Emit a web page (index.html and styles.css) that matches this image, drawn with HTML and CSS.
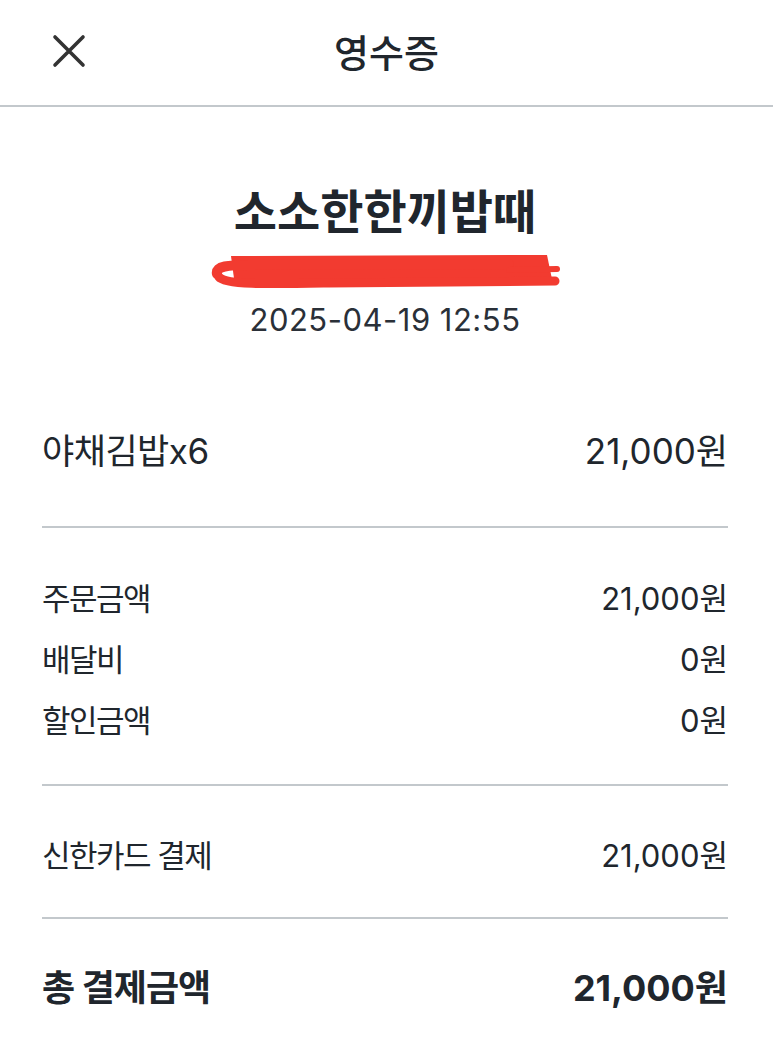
FILE: index.html
```html
<!DOCTYPE html>
<html lang="ko">
<head>
    <meta charset="UTF-8">
    <meta name="viewport" content="width=device-width, initial-scale=1.0">
    <title>영수증</title>
    <link rel="stylesheet" href="styles.css">
</head>
<body>
    <header class="top-bar">
        <button class="close-button" aria-label="닫기">
            <svg width="34" height="34" viewBox="0 0 34 34">
                <path d="M3 3 L31 31 M31 3 L3 31" stroke="#333" stroke-width="3.6" stroke-linecap="round" fill="none"/>
            </svg>
        </button>
        <h1 class="top-title">영수증</h1>
    </header>

    <main class="receipt">
        <section class="shop">
            <h2 class="shop-name">소소한한끼밥때</h2>
            <div class="shop-address">
                <span class="address-text">서울 ○○구 ○○로 00, 1층</span>
                <svg class="scribble" width="352" height="40" viewBox="0 0 352 40">
                    <path d="M22 6 L338 5 L344 34 L26 36 Z" fill="#f23b30"/>
                    <path d="M8 24 C6 16 20 15 40 15 L300 14" stroke="#f23b30" stroke-width="10" stroke-linecap="round" fill="none"/>
                    <path d="M10 27 C16 35 60 34 120 33 L346 31" stroke="#f23b30" stroke-width="9" stroke-linecap="round" fill="none"/>
                    <path d="M300 20 L348 19" stroke="#f23b30" stroke-width="6" stroke-linecap="round" fill="none"/>
                </svg>
            </div>
            <div class="shop-date">2025-04-19 12:55</div>
        </section>

        <section class="block items">
            <div class="row item-row">
                <span>야채김밥x6</span>
                <span class="value">21,000원</span>
            </div>
        </section>

        <section class="block amounts">
            <div class="row">
                <span>주문금액</span>
                <span class="value">21,000원</span>
            </div>
            <div class="row">
                <span>배달비</span>
                <span class="value">0원</span>
            </div>
            <div class="row">
                <span>할인금액</span>
                <span class="value">0원</span>
            </div>
        </section>

        <section class="block payment">
            <div class="row">
                <span>신한카드 결제</span>
                <span class="value">21,000원</span>
            </div>
        </section>

        <section class="total">
            <div class="row total-row">
                <span>총 결제금액</span>
                <span class="value">21,000원</span>
            </div>
        </section>
    </main>
</body>
</html>
```

FILE: styles.css
```css
body {
    margin: 0;
    background-color: #ffffff;
    color: #20262d;
    font-family: Inter, "Noto Sans CJK KR", sans-serif;
}
.top-bar {
    position: relative;
    height: 105px;
    border-bottom: 2px solid #c3c8cc;
    display: flex;
    align-items: center;
    justify-content: center;
}
.close-button {
    position: absolute;
    left: 52px;
    top: 34px;
    padding: 0;
    border: none;
    background: none;
    width: 34px;
    height: 34px;
}
.close-button svg {
    display: block;
}
.top-title {
    margin: 0;
    font-size: 38px;
    font-weight: 500;
    line-height: 1;
}
.receipt {
    padding: 0 45px 0 42px;
}
.shop {
    padding-top: 75px;
    display: flex;
    flex-direction: column;
    align-items: center;
}
.shop-name {
    margin: 0;
    font-size: 47px;
    font-weight: 700;
    line-height: 60px;
}
.shop-address {
    position: relative;
    margin-top: 8px;
    width: 352px;
    height: 40px;
    overflow: hidden;
}
.address-text {
    display: block;
    text-align: center;
    white-space: nowrap;
    font-size: 22px;
    line-height: 40px;
    color: #20262d;
}
.scribble {
    position: absolute;
    left: 0;
    top: 0;
}
.shop-date {
    margin-top: 10px;
    font-size: 31px;
    line-height: 40px;
    letter-spacing: 0.5px;
    color: #2a3038;
}
.block {
    border-bottom: 2px solid #c3c8cc;
}
.row {
    display: flex;
    justify-content: space-between;
    align-items: center;
    height: 44px;
    font-size: 31px;
    letter-spacing: -1.5px;
}
.row .value {
    letter-spacing: 0;
}
.items {
    padding: 86px 0 56px;
}
.item-row {
    font-size: 35px;
    letter-spacing: -0.5px;
}
.amounts {
    padding: 46px 0 44px;
    display: flex;
    flex-direction: column;
    gap: 17px;
}
.payment {
    padding: 45px 0 42px;
}
.total {
    padding-top: 42px;
}
.total-row {
    height: 48px;
    font-size: 36px;
    font-weight: 700;
    letter-spacing: -1px;
}
```
